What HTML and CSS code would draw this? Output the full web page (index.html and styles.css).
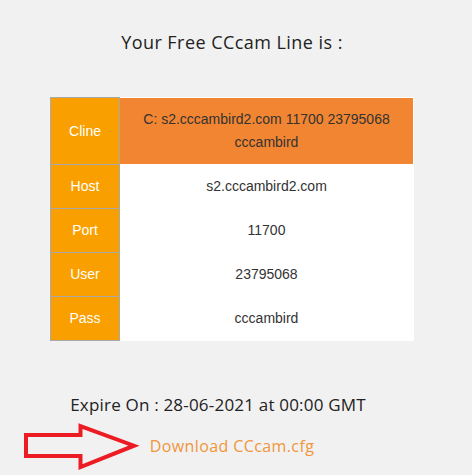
FILE: index.html
```html
<!DOCTYPE html>
<html>
<head>
<meta charset="utf-8">
<link rel="stylesheet" href="styles.css">
</head>
<body>
<div class="page">
  <h2 class="title">Your Free CCcam Line is :</h2>
  <table class="line">
    <tr class="hl">
      <td class="k">Cline</td>
      <td class="v">C: s2.cccambird2.com 11700 23795068 cccambird</td>
    </tr>
    <tr><td class="k">Host</td><td class="v">s2.cccambird2.com</td></tr>
    <tr><td class="k">Port</td><td class="v">11700</td></tr>
    <tr><td class="k">User</td><td class="v">23795068</td></tr>
    <tr><td class="k">Pass</td><td class="v">cccambird</td></tr>
  </table>
  <p class="expire">Expire On : 28-06-2021 at 00:00 GMT</p>
  <div class="dl">
    <svg class="arrow" width="120" height="54" viewBox="0 0 120 54">
      <polygon points="5,16 59.5,16 59.5,7 113,26.7 59.5,48 59.5,37 5,37" fill="none" stroke="#ed1c24" stroke-width="4" stroke-linejoin="miter"/>
    </svg>
    <a class="link" href="#">Download CCcam.cfg</a>
    <span></span>
  </div>
</div>
</body>
</html>
```

FILE: styles.css
```css
html, body {
  margin: 0;
  padding: 0;
  background: #f1f1f1;
}
.page {
  width: 464px;
  padding-top: 30px;
  font-family: "Open Sans", "DejaVu Sans", sans-serif;
  color: #222;
}
.title {
  margin: 0;
  text-align: center;
  font-size: 18px;
  font-weight: 400;
  line-height: 24px;
  letter-spacing: 0.45px;
}
.line {
  margin: 43px auto 0;
  width: 364px;
  border-collapse: collapse;
  font-family: "Liberation Sans", Arial, sans-serif;
  font-size: 14px;
  line-height: 23px;
}
.line td {
  padding: 10px 8px;
  text-align: center;
  vertical-align: middle;
}
.line .k {
  width: 52px;
  background: #f9a000;
  color: #fff;
  border: 1px solid #a9a9a9;
}
.line .v {
  background: #fff;
  color: #333;
  border: 1px solid #fff;
  padding-left: 20px;
  padding-right: 20px;
}
.line .hl .v {
  background: #f28531;
}
.expire {
  margin: 52px 0 0;
  padding-right: 28px;
  text-align: center;
  font-size: 17px;
  line-height: 24px;
  letter-spacing: 0.2px;
}
.dl {
  display: grid;
  grid-template-columns: 1fr auto 1fr;
  align-items: center;
  margin-top: 2px;
}
.arrow {
  justify-self: end;
  margin-right: 9px;
  display: block;
}
.link {
  color: #f0963c;
  text-decoration: none;
  font-size: 16px;
  letter-spacing: 0.4px;
}
```
